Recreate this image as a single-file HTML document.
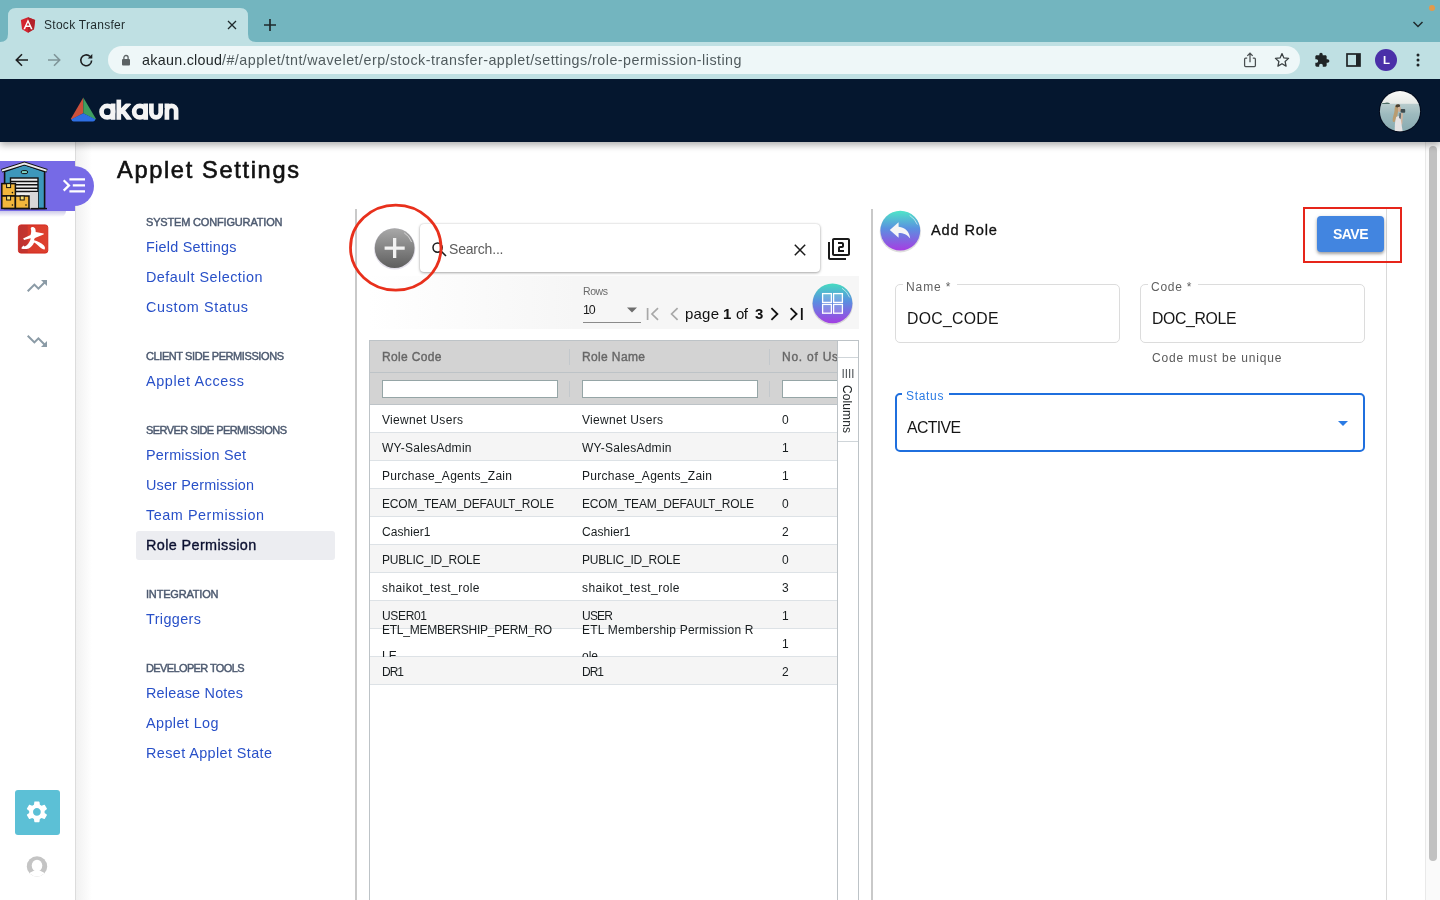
<!DOCTYPE html>
<html><head><meta charset="utf-8"><title>Stock Transfer</title>
<style>
*{box-sizing:border-box;margin:0;padding:0}
html,body{width:1440px;height:900px;overflow:hidden;background:#fff;font-family:"Liberation Sans",sans-serif;}
body{position:relative}
.a{position:absolute}
.t{position:absolute;white-space:pre;line-height:1;font-family:"Liberation Sans",sans-serif;}
svg{position:absolute;overflow:visible}
.t{will-change:transform;}

</style></head>
<body>
<div class="a" style="left:76px;top:142px;width:16px;height:758px;background:linear-gradient(90deg,#f1f1f1,#ffffff)"></div>
<div class="a" style="left:75px;top:142px;width:1px;height:758px;background:#dcdcdc"></div>
<div class="a" style="left:54px;top:166px;width:40px;height:40px;border-radius:20px;background:#766ae6"></div>
<div class="a" style="left:0;top:161px;width:75px;height:50px;background:#766ae6"></div>
<div class="a" style="left:0;top:211px;width:66px;height:6px;background:linear-gradient(180deg,rgba(90,80,180,.30),rgba(90,80,180,0));border-radius:0 0 8px 0"></div>
<svg style="left:0px;top:161px" width="48" height="50" viewBox="0 0 48 50">
<path d="M4.6 10.6 V47.5 H44.6 V10.6 L24.4 3.6 Z" fill="#3d97bb" stroke="#111" stroke-width="1.6"/>
<path d="M1.6 9.8 L24.4 2.4 L47 9.8" stroke="#111" stroke-width="3.8" fill="none" stroke-linejoin="miter"/>
<path d="M2 9.7 L24.4 2.5 L46.6 9.7" stroke="#ececec" stroke-width="1.9" fill="none"/>
<rect x="21.2" y="9.6" width="6.4" height="3" rx="1.5" fill="#7fd6c6" stroke="#111" stroke-width="1"/>
<rect x="10.5" y="17" width="27.5" height="30.5" fill="#ededed" stroke="#111" stroke-width="1.4"/>
<path d="M10.5 20.4 H38 M10.5 23.8 H38 M10.5 27.2 H38 M10.5 30.6 H38" stroke="#111" stroke-width="1.5"/>
<rect x="30" y="31" width="8" height="16.5" fill="#d8d8d8"/>
<rect x="1.8" y="22.6" width="13.6" height="12.4" fill="#f2b63c" stroke="#111" stroke-width="1.5"/>
<rect x="1.8" y="35" width="13.6" height="12.4" fill="#f2b63c" stroke="#111" stroke-width="1.5"/>
<rect x="15.4" y="35" width="13.6" height="12.4" fill="#f2b63c" stroke="#111" stroke-width="1.5"/>
<rect x="6.6" y="22.6" width="4" height="4" fill="#f9e27a" stroke="#111" stroke-width="1"/>
<rect x="6.6" y="35" width="4" height="4" fill="#f9e27a" stroke="#111" stroke-width="1"/>
<rect x="20.2" y="35" width="4" height="4" fill="#f9e27a" stroke="#111" stroke-width="1"/>
<circle cx="12.4" cy="31.6" r=".8" fill="#111"/><circle cx="12.4" cy="44" r=".8" fill="#111"/><circle cx="26" cy="44" r=".8" fill="#111"/>
<path d="M31 47.6 H47" stroke="#111" stroke-width="1.4"/>
</svg>
<svg style="left:62px;top:177px" width="24" height="17" viewBox="0 0 24 17" fill="none" stroke="#fff">
<path d="M1.700 3.2 L7 8.4 L1.700 13.600" stroke-width="2.2"/>
<path d="M7.4 2.4 H23 M10.8 8.4 H23 M7.4 14.4 H23" stroke-width="2.3"/></svg>
<svg style="left:18px;top:224px" width="31" height="30" viewBox="0 0 31 30">
<defs><linearGradient id="rg" x1="0" y1="0" x2="1" y2="0"><stop offset="0" stop-color="#bd3331"/><stop offset=".3" stop-color="#c4352f"/><stop offset=".34" stop-color="#d93b2d"/><stop offset="1" stop-color="#de412e"/></linearGradient></defs>
<rect x="0.4" y="0.9" width="29.4" height="28.2" rx="2.6" fill="url(#rg)" stroke="#d3241a" stroke-width=".9"/>
<path transform="translate(.1,.6)" d="M13.6 2.4 C15 2.2 16.6 2.8 17.2 4.2 C17.6 5.4 17.5 6.4 17.6 7.3 L25.6 8.9 C25.9 9.3 25.7 9.7 25.4 9.9 L17.4 13.2 C16.4 13.8 16 14.6 16 15.6 C19 16.4 23.6 18.4 25.8 21 C26.8 22.2 27.2 23.4 26.6 25 C24.4 24.6 22.6 23.2 20.8 21.6 C19.400 20.4 17.8 18.8 16 17.8 C15 20 13.4 22.4 10.6 23.8 C8.4 24.6 5.6 24.6 3.6 24.2 C3.2 23.8 3.2 23.4 3.6 23 L5.2 21 L6.6 21.800 C9 20.8 11.2 18.4 12.2 15.4 L12.6 13.6 L6 15.4 L5 14 L12.4 10.4 C13.2 8.6 13.4 5.6 12.6 3.6 Z" fill="#fff"/>
</svg>
<svg style="left:25px;top:274px" width="24" height="24" viewBox="0 0 24 24"><path d="M16 6l2.290 2.290-4.880 4.880-4-4L2 16.590 3.410 18l6-6 4 4 6.300-6.290L22 12V6z" fill="#8b9ba6"/></svg>
<svg style="left:25px;top:329px" width="24" height="24" viewBox="0 0 24 24"><path d="M16 18l2.290-2.290-4.880-4.880-4 4L2 7.410 3.410 6l6 6 4-4 6.300 6.290L22 12v6z" fill="#8b9ba6"/></svg>
<div class="a" style="left:15px;top:790px;width:45px;height:45px;border-radius:3px;background:#5cc0d6"></div>
<svg style="left:23.9px;top:799px" width="25.8" height="25.8" viewBox="0 0 24 24"><path d="M19.140 12.940c.040-.3.060-.61.060-.94 0-.32-.020-.64-.070-.94l2.030-1.580a.49.49 0 0 0 .12-.61l-1.920-3.320a.488.488 0 0 0-.59-.22l-2.390.96c-.5-.38-1.030-.7-1.620-.94l-.36-2.540a.484.484 0 0 0-.48-.41h-3.840c-.24 0-.43.170-.47.410l-.36 2.540c-.59.240-1.130.57-1.620.94l-2.390-.96c-.22-.08-.47 0-.59.220L2.740 8.870c-.12.210-.08.470.12.610l2.030 1.580c-.05.300-.09.630-.09.940s.02.640.07.940l-2.030 1.580a.49.49 0 0 0-.12.610l1.920 3.320c.12.220.37.290.59.220l2.390-.96c.5.380 1.030.7 1.620.94l.36 2.540c.5.240.24.410.48.410h3.840c.24 0 .44-.17.470-.41l.36-2.540c.59-.24 1.130-.56 1.620-.94l2.390.96c.22.080.47 0 .59-.22l1.920-3.320c.12-.22.070-.47-.12-.61l-2.010-1.580zM12 15.600c-1.980 0-3.600-1.620-3.600-3.600s1.620-3.600 3.600-3.600 3.600 1.620 3.600 3.600-1.620 3.600-3.600 3.600z" fill="#fff"/></svg>
<svg style="left:26px;top:856px" width="22" height="22" viewBox="0 0 22 22"><defs><clipPath id="uc"><circle cx="11" cy="10.4" r="10.2"/></clipPath></defs>
<circle cx="11" cy="10.4" r="10.2" fill="#c4c4c4"/>
<g clip-path="url(#uc)" fill="#fff"><ellipse cx="11" cy="9.600" rx="5.300" ry="5.900"/><path d="M1 24 C1 17.200 5.400 16 8.200 14.600 H13.800 C16.600 16 21 17.200 21 24 Z"/></g></svg>
<span class="t" style="left:117.00px;top:159.02px;font-size:23.6px;font-weight:400;color:#111;letter-spacing:1.663px;-webkit-text-stroke:0.62px #111;">Applet Settings</span>
<span class="t" style="left:146.00px;top:217.29px;font-size:11px;font-weight:400;color:#4d5a70;letter-spacing:-0.171px;-webkit-text-stroke:0.45px #4d5a70;">SYSTEM CONFIGURATION</span>
<span class="t" style="left:146.00px;top:240.21px;font-size:14.4px;font-weight:400;color:#2850c8;letter-spacing:0.255px;">Field Settings</span>
<span class="t" style="left:146.00px;top:270.21px;font-size:14.4px;font-weight:400;color:#2850c8;letter-spacing:0.481px;">Default Selection</span>
<span class="t" style="left:146.00px;top:300.21px;font-size:14.4px;font-weight:400;color:#2850c8;letter-spacing:0.634px;">Custom Status</span>
<span class="t" style="left:146.00px;top:351.29px;font-size:11px;font-weight:400;color:#4d5a70;letter-spacing:-0.414px;-webkit-text-stroke:0.45px #4d5a70;">CLIENT SIDE PERMISSIONS</span>
<span class="t" style="left:146.00px;top:374.21px;font-size:14.4px;font-weight:400;color:#2850c8;letter-spacing:0.633px;">Applet Access</span>
<span class="t" style="left:146.00px;top:425.29px;font-size:11px;font-weight:400;color:#4d5a70;letter-spacing:-0.556px;-webkit-text-stroke:0.45px #4d5a70;">SERVER SIDE PERMISSIONS</span>
<span class="t" style="left:146.00px;top:448.21px;font-size:14.4px;font-weight:400;color:#2850c8;letter-spacing:0.248px;">Permission Set</span>
<span class="t" style="left:146.00px;top:478.21px;font-size:14.4px;font-weight:400;color:#2850c8;letter-spacing:0.174px;">User Permission</span>
<span class="t" style="left:146.00px;top:508.21px;font-size:14.4px;font-weight:400;color:#2850c8;letter-spacing:0.545px;">Team Permission</span>
<div class="a" style="left:136px;top:531px;width:199px;height:29px;border-radius:3px;background:#ecedf1"></div>
<span class="t" style="left:146.00px;top:538.01px;font-size:14.4px;font-weight:400;color:#0b1030;letter-spacing:0.387px;-webkit-text-stroke:0.35px #0b1030;">Role Permission</span>
<span class="t" style="left:146.00px;top:589.29px;font-size:11px;font-weight:400;color:#4d5a70;letter-spacing:-0.186px;-webkit-text-stroke:0.45px #4d5a70;">INTEGRATION</span>
<span class="t" style="left:146.00px;top:612.21px;font-size:14.4px;font-weight:400;color:#2850c8;letter-spacing:0.393px;">Triggers</span>
<span class="t" style="left:146.00px;top:663.29px;font-size:11px;font-weight:400;color:#4d5a70;letter-spacing:-0.622px;-webkit-text-stroke:0.45px #4d5a70;">DEVELOPER TOOLS</span>
<span class="t" style="left:146.00px;top:686.21px;font-size:14.4px;font-weight:400;color:#2850c8;letter-spacing:0.217px;">Release Notes</span>
<span class="t" style="left:146.00px;top:716.21px;font-size:14.4px;font-weight:400;color:#2850c8;letter-spacing:0.410px;">Applet Log</span>
<span class="t" style="left:146.00px;top:746.21px;font-size:14.4px;font-weight:400;color:#2850c8;letter-spacing:0.400px;">Reset Applet State</span>
<div class="a" style="left:355px;top:209px;width:2px;height:691px;background:#c9c9c9"></div>
<div class="a" style="left:871px;top:209px;width:2px;height:691px;background:#c9c9c9"></div>
<div class="a" style="left:369px;top:276px;width:490px;height:53px;background:linear-gradient(90deg,#ffffff 0,#f6f6f6 42%)"></div>
<div class="a" style="left:420px;top:224px;width:400px;height:48px;border-radius:4px;background:#fff;box-shadow:0 1px 3px rgba(0,0,0,.32),0 0 2px rgba(0,0,0,.16)"></div>
<svg style="left:431.6px;top:242px" width="15" height="15" viewBox="0 0 15 15"><circle cx="5.6" cy="5.6" r="4.6" stroke="#1a1a1a" stroke-width="1.5" fill="none"/><path d="M9 9 L14 14" stroke="#1a1a1a" stroke-width="1.6"/></svg>
<span class="t" style="left:449.00px;top:241.65px;font-size:14px;font-weight:400;color:#5c5c5c;letter-spacing:-0.191px;">Search...</span>
<svg style="left:793.6px;top:244.2px" width="12" height="12" viewBox="0 0 12 12"><path d="M0.8 0.8 L11.2 11.2 M11.2 0.8 L0.8 11.2" stroke="#1a1a1a" stroke-width="1.5" fill="none"/></svg>
<svg style="left:826.8px;top:237px" width="24" height="24" viewBox="0 0 24 24"><path d="M3 5H1v16c0 1.100.9 2 2 2h16v-2H3V5zm18-4H7c-1.100 0-2 .9-2 2v14c0 1.100.9 2 2 2h14c1.100 0 2-.9 2-2V3c0-1.100-.9-2-2-2zm0 16H7V3h14v14zm-4-4h-4v-2h2c1.100 0 2-.89 2-2V7c0-1.110-.9-2-2-2h-4v2h4v2h-2c-1.100 0-2 .89-2 2v4h6v-2z" fill="#1a1a1a"/></svg>
<svg style="left:371px;top:225px" width="48" height="48" viewBox="0 0 48 48"><defs>
<linearGradient id="gg" x1="0" y1="0" x2="0" y2="1"><stop offset="0" stop-color="#a9a9a9"/><stop offset="1" stop-color="#5e5e5e"/></linearGradient></defs>
<circle cx="23.65" cy="23.9" r="20.7" fill="rgba(90,70,130,.16)"/>
<circle cx="23.65" cy="23.05" r="19.9" fill="url(#gg)"/>
<path d="M33.2 7.8 A18.6 18.6 0 0 1 40.6 17" stroke="rgba(255,255,255,.6)" stroke-width="1" fill="none"/>
<path d="M23.65 13 V33.1 M13.6 23.05 H33.7" stroke="#f2f2f2" stroke-width="3.3" fill="none"/></svg>
<svg style="left:345px;top:200px" width="102" height="96" viewBox="0 0 102 96"><ellipse cx="50.75" cy="47.65" rx="45.25" ry="42.55" stroke="#e8301c" stroke-width="2.8" fill="none"/></svg>
<span class="t" style="left:583.00px;top:286.11px;font-size:10.5px;font-weight:400;color:#6a6a6a;letter-spacing:-0.422px;">Rows</span>
<span class="t" style="left:583.00px;top:303.50px;font-size:12.4px;font-weight:400;color:#1a1a1a;letter-spacing:-1.197px;">10</span>
<svg style="left:627px;top:307px" width="10" height="6" viewBox="0 0 10 6"><path d="M0 0.4 H10 L5 5.6 Z" fill="#6e6e6e"/></svg>
<div class="a" style="left:583px;top:322px;width:58px;height:1px;background:#8a8a8a"></div>
<svg style="left:646px;top:307px" width="14" height="14" viewBox="0 0 14 14"><path d="M1.6 1 V13 M12 1.2 L6 7 L12 12.8" stroke="#a8a8a8" stroke-width="1.7" fill="none"/></svg>
<svg style="left:670px;top:307px" width="9" height="14" viewBox="0 0 9 14"><path d="M7.6 1.2 L1.6 7 L7.6 12.8" stroke="#a8a8a8" stroke-width="1.7" fill="none"/></svg>
<span class="t" style="left:685.00px;top:305.50px;font-size:15px;font-weight:400;color:#111;letter-spacing:0.208px;">page</span>
<span class="t" style="left:722.50px;top:305.50px;font-size:15px;font-weight:700;color:#111;letter-spacing:0.000px;">1</span>
<span class="t" style="left:735.50px;top:305.50px;font-size:15px;font-weight:400;color:#111;letter-spacing:-0.516px;">of</span>
<span class="t" style="left:754.80px;top:305.50px;font-size:15px;font-weight:700;color:#111;letter-spacing:0.000px;">3</span>
<svg style="left:770px;top:307px" width="9" height="14" viewBox="0 0 9 14"><path d="M1.4 1.2 L7.4 7 L1.4 12.8" stroke="#111" stroke-width="1.8" fill="none"/></svg>
<svg style="left:789px;top:307px" width="15" height="14" viewBox="0 0 15 14"><path d="M1.6 1.2 L7.6 7 L1.6 12.8 M12.8 1 V13" stroke="#111" stroke-width="1.8" fill="none"/></svg>
<svg style="left:809px;top:280px" width="48" height="48" viewBox="0 0 48 48"><defs>
<linearGradient id="gp" x1="0" y1="0" x2="0" y2="1"><stop offset="0" stop-color="#46dcc0"/><stop offset=".45" stop-color="#5a8fe0"/><stop offset="1" stop-color="#a33fe3"/></linearGradient></defs>
<circle cx="23.5" cy="24.4" r="20.4" fill="rgba(0,0,0,.13)"/>
<circle cx="23.5" cy="23.3" r="19.9" fill="url(#gp)"/>
<path d="M33 8.2 A19 19 0 0 1 40.6 17.4" stroke="rgba(255,255,255,.55)" stroke-width="1" fill="none"/>
<g stroke="#fff" stroke-width="1.3" fill="rgba(255,255,255,.16)"><rect x="13.6" y="13.6" width="8.8" height="8.8"/><rect x="24.6" y="13.6" width="8.8" height="8.8"/><rect x="13.6" y="24.4" width="8.8" height="8.8"/><rect x="24.6" y="24.4" width="8.8" height="8.8"/></g></svg>
<div class="a" style="left:369px;top:340px;width:490px;height:560px;border:1px solid #bdc3c7;border-bottom:none;background:#fff"></div>
<div class="a" style="left:370px;top:341px;width:467px;height:64px;background:#d3d3d3"></div>
<div class="a" style="left:370px;top:372px;width:467px;height:1px;background:#bdc3c7"></div>
<div class="a" style="left:370px;top:404px;width:467px;height:1px;background:#bdc3c7"></div>
<div class="a" style="left:569px;top:349px;width:1px;height:16px;background:#c3c8cc"></div>
<div class="a" style="left:569px;top:381px;width:1px;height:16px;background:#c3c8cc"></div>
<div class="a" style="left:769px;top:349px;width:1px;height:16px;background:#c3c8cc"></div>
<div class="a" style="left:769px;top:381px;width:1px;height:16px;background:#c3c8cc"></div>
<span class="t" style="left:382.00px;top:350.84px;font-size:12px;font-weight:400;color:#666666;letter-spacing:0.350px;-webkit-text-stroke:0.38px #666666;">Role Code</span>
<span class="t" style="left:582.00px;top:350.84px;font-size:12px;font-weight:400;color:#666666;letter-spacing:0.371px;-webkit-text-stroke:0.38px #666666;">Role Name</span>
<div class="a" style="left:782px;top:345px;width:55px;height:24px;overflow:hidden"><span class="t" style="left:0.00px;top:5.84px;font-size:12px;font-weight:400;color:#666666;letter-spacing:0.756px;-webkit-text-stroke:0.38px #666666;">No. of Users</span></div>
<div class="a" style="left:382px;top:380px;width:176px;height:18px;background:#fff;border:1px solid #95a5a6;"></div>
<div class="a" style="left:582px;top:380px;width:176px;height:18px;background:#fff;border:1px solid #95a5a6;"></div>
<div class="a" style="left:782px;top:380px;width:56px;height:18px;background:#fff;border:1px solid #95a5a6;border-right:none;"></div>
<div class="a" style="left:370px;top:405px;width:467px;height:28px;background:#fff;border-bottom:1px solid #dde2e6"></div>
<span class="t" style="left:382.00px;top:413.54px;font-size:12px;font-weight:400;color:#181d1f;letter-spacing:0.320px;">Viewnet Users</span>
<span class="t" style="left:582.00px;top:413.54px;font-size:12px;font-weight:400;color:#181d1f;letter-spacing:0.320px;">Viewnet Users</span>
<span class="t" style="left:782.00px;top:413.54px;font-size:12px;font-weight:400;color:#181d1f;">0</span>
<div class="a" style="left:370px;top:433px;width:467px;height:28px;background:#f5f5f5;border-bottom:1px solid #dde2e6"></div>
<span class="t" style="left:382.00px;top:441.54px;font-size:12px;font-weight:400;color:#181d1f;letter-spacing:0.270px;">WY-SalesAdmin</span>
<span class="t" style="left:582.00px;top:441.54px;font-size:12px;font-weight:400;color:#181d1f;letter-spacing:0.270px;">WY-SalesAdmin</span>
<span class="t" style="left:782.00px;top:441.54px;font-size:12px;font-weight:400;color:#181d1f;">1</span>
<div class="a" style="left:370px;top:461px;width:467px;height:28px;background:#fff;border-bottom:1px solid #dde2e6"></div>
<span class="t" style="left:382.00px;top:469.54px;font-size:12px;font-weight:400;color:#181d1f;letter-spacing:0.276px;">Purchase_Agents_Zain</span>
<span class="t" style="left:582.00px;top:469.54px;font-size:12px;font-weight:400;color:#181d1f;letter-spacing:0.276px;">Purchase_Agents_Zain</span>
<span class="t" style="left:782.00px;top:469.54px;font-size:12px;font-weight:400;color:#181d1f;">1</span>
<div class="a" style="left:370px;top:489px;width:467px;height:28px;background:#f5f5f5;border-bottom:1px solid #dde2e6"></div>
<span class="t" style="left:382.00px;top:497.54px;font-size:12px;font-weight:400;color:#181d1f;letter-spacing:-0.150px;">ECOM_TEAM_DEFAULT_ROLE</span>
<span class="t" style="left:582.00px;top:497.54px;font-size:12px;font-weight:400;color:#181d1f;letter-spacing:-0.150px;">ECOM_TEAM_DEFAULT_ROLE</span>
<span class="t" style="left:782.00px;top:497.54px;font-size:12px;font-weight:400;color:#181d1f;">0</span>
<div class="a" style="left:370px;top:517px;width:467px;height:28px;background:#fff;border-bottom:1px solid #dde2e6"></div>
<span class="t" style="left:382.00px;top:525.54px;font-size:12px;font-weight:400;color:#181d1f;letter-spacing:0.067px;">Cashier1</span>
<span class="t" style="left:582.00px;top:525.54px;font-size:12px;font-weight:400;color:#181d1f;letter-spacing:0.067px;">Cashier1</span>
<span class="t" style="left:782.00px;top:525.54px;font-size:12px;font-weight:400;color:#181d1f;">2</span>
<div class="a" style="left:370px;top:545px;width:467px;height:28px;background:#f5f5f5;border-bottom:1px solid #dde2e6"></div>
<span class="t" style="left:382.00px;top:553.54px;font-size:12px;font-weight:400;color:#181d1f;letter-spacing:-0.221px;">PUBLIC_ID_ROLE</span>
<span class="t" style="left:582.00px;top:553.54px;font-size:12px;font-weight:400;color:#181d1f;letter-spacing:-0.221px;">PUBLIC_ID_ROLE</span>
<span class="t" style="left:782.00px;top:553.54px;font-size:12px;font-weight:400;color:#181d1f;">0</span>
<div class="a" style="left:370px;top:573px;width:467px;height:28px;background:#fff;border-bottom:1px solid #dde2e6"></div>
<span class="t" style="left:382.00px;top:581.54px;font-size:12px;font-weight:400;color:#181d1f;letter-spacing:0.423px;">shaikot_test_role</span>
<span class="t" style="left:582.00px;top:581.54px;font-size:12px;font-weight:400;color:#181d1f;letter-spacing:0.423px;">shaikot_test_role</span>
<span class="t" style="left:782.00px;top:581.54px;font-size:12px;font-weight:400;color:#181d1f;">3</span>
<div class="a" style="left:370px;top:601px;width:467px;height:28px;background:#f5f5f5;border-bottom:1px solid #dde2e6"></div>
<span class="t" style="left:382.00px;top:609.54px;font-size:12px;font-weight:400;color:#181d1f;letter-spacing:-0.338px;">USER01</span>
<span class="t" style="left:582.00px;top:609.54px;font-size:12px;font-weight:400;color:#181d1f;letter-spacing:-0.781px;">USER</span>
<span class="t" style="left:782.00px;top:609.54px;font-size:12px;font-weight:400;color:#181d1f;">1</span>
<div class="a" style="left:370px;top:629px;width:467px;height:28px;background:#fff;border-bottom:1px solid #dde2e6"></div>
<span class="t" style="left:382.00px;top:624.14px;font-size:12px;font-weight:400;color:#181d1f;letter-spacing:-0.257px;">ETL_MEMBERSHIP_PERM_RO</span>
<div class="a" style="left:382px;top:650px;width:60px;height:7px;overflow:hidden"><span class="t" style="left:0.00px;top:0.24px;font-size:12px;font-weight:400;color:#181d1f;">LE</span></div>
<span class="t" style="left:582.00px;top:624.14px;font-size:12px;font-weight:400;color:#181d1f;letter-spacing:0.227px;">ETL Membership Permission R</span>
<div class="a" style="left:582px;top:650px;width:60px;height:7px;overflow:hidden"><span class="t" style="left:0.00px;top:0.24px;font-size:12px;font-weight:400;color:#181d1f;">ole</span></div>
<span class="t" style="left:782.00px;top:637.54px;font-size:12px;font-weight:400;color:#181d1f;">1</span>
<div class="a" style="left:370px;top:657px;width:467px;height:28px;background:#f5f5f5;border-bottom:1px solid #dde2e6"></div>
<span class="t" style="left:382.00px;top:665.54px;font-size:12px;font-weight:400;color:#181d1f;letter-spacing:-1.008px;">DR1</span>
<span class="t" style="left:582.00px;top:665.54px;font-size:12px;font-weight:400;color:#181d1f;letter-spacing:-1.008px;">DR1</span>
<span class="t" style="left:782.00px;top:665.54px;font-size:12px;font-weight:400;color:#181d1f;">2</span>
<div class="a" style="left:836.6px;top:341px;width:1px;height:559px;background:#bdc3c7"></div>
<div class="a" style="left:838px;top:341px;width:20px;height:559px;background:#fff"></div>
<div class="a" style="left:838px;top:357px;width:20px;height:1px;background:#cfd5d9"></div>
<div class="a" style="left:838px;top:441px;width:20px;height:1px;background:#cfd5d9"></div>
<svg style="left:842px;top:369px" width="12" height="9" viewBox="0 0 12 9"><path d="M1.2 0 V9 M4.4 0 V9 M7.6 0 V9 M10.8 0 V9" stroke="#5a5f63" stroke-width="1.2"/></svg>
<div class="a" style="left:838px;top:385px;width:20px;height:48px"><span class="t" style="left:15px;top:0;transform-origin:0 0;transform:rotate(90deg);font-size:12px;color:#181d1f;letter-spacing:0.1px">Columns</span></div>
<div class="a" style="left:1386px;top:209px;width:1px;height:691px;background:#d9d9d9"></div>
<svg style="left:876px;top:206px" width="50" height="50" viewBox="0 0 50 50"><defs>
<linearGradient id="gb" x1="0" y1="0" x2="0" y2="1"><stop offset="0" stop-color="#4fe6c8"/><stop offset=".45" stop-color="#5b90e0"/><stop offset="1" stop-color="#a63de2"/></linearGradient></defs>
<circle cx="24.3" cy="25.8" r="20.6" fill="rgba(0,0,0,.13)"/>
<circle cx="24.3" cy="24.6" r="19.9" fill="url(#gb)"/>
<path d="M33.6 9.4 A19 19 0 0 1 41.4 18.6" stroke="rgba(255,255,255,.6)" stroke-width="1" fill="none"/>
<path d="M22.6 16.2 L13.8 24 L22.6 31.8 V27 C27.6 27 31.2 28.4 34.2 32.6 C33.4 26 29.6 21.4 22.6 20.8 Z" fill="#f6f6f6"/></svg>
<span class="t" style="left:931.40px;top:222.94px;font-size:14.6px;font-weight:400;color:#111;letter-spacing:0.850px;-webkit-text-stroke:0.3px #111;">Add Role</span>
<div class="a" style="left:1317px;top:216px;width:67px;height:36px;border-radius:4px;background:#4285e0;box-shadow:0 2px 3px rgba(0,0,0,.3),0 1px 5px rgba(0,0,0,.12)"></div>
<span class="t" style="left:1332.70px;top:226.55px;font-size:14px;font-weight:700;color:#fff;letter-spacing:-0.531px;">SAVE</span>
<div class="a" style="left:1302.5px;top:207px;width:99.5px;height:56px;border:2px solid #e6251a"></div>
<div class="a" style="left:894.5px;top:284.4px;width:225.5px;height:59px;border:1px solid #dcdcdc;border-radius:5px"></div>
<div class="a" style="left:903px;top:283.4px;width:53.5px;height:4px;background:#fff"></div>
<span class="t" style="left:906.10px;top:281.14px;font-size:12px;font-weight:400;color:#5f5f5f;letter-spacing:0.897px;">Name *</span>
<span class="t" style="left:906.90px;top:310.63px;font-size:15.8px;font-weight:400;color:#151515;letter-spacing:0.281px;">DOC_CODE</span>
<div class="a" style="left:1139.5px;top:284.4px;width:225px;height:59px;border:1px solid #dcdcdc;border-radius:5px"></div>
<div class="a" style="left:1148px;top:283.4px;width:49.5px;height:4px;background:#fff"></div>
<span class="t" style="left:1151.10px;top:281.14px;font-size:12px;font-weight:400;color:#5f5f5f;letter-spacing:0.759px;">Code *</span>
<span class="t" style="left:1151.90px;top:310.63px;font-size:15.8px;font-weight:400;color:#151515;letter-spacing:-0.344px;">DOC_ROLE</span>
<span class="t" style="left:1151.50px;top:352.04px;font-size:12px;font-weight:400;color:#5a5a5a;letter-spacing:0.857px;">Code must be unique</span>
<div class="a" style="left:894.5px;top:393px;width:470px;height:59.3px;border:2px solid #1f6fde;border-radius:5px"></div>
<div class="a" style="left:901.5px;top:392px;width:47.5px;height:4px;background:#fff"></div>
<span class="t" style="left:906.10px;top:389.74px;font-size:12px;font-weight:400;color:#2b7be4;letter-spacing:0.674px;">Status</span>
<span class="t" style="left:906.90px;top:420.13px;font-size:15.8px;font-weight:400;color:#151515;letter-spacing:-0.613px;">ACTIVE</span>
<svg style="left:1338px;top:420.6px" width="10" height="5" viewBox="0 0 10 5"><path d="M0 0 H10 L5 5 Z" fill="#2b7be4"/></svg>
<div class="a" style="left:1425px;top:142px;width:15px;height:758px;background:#fafafa;border-left:1px solid #e9e9e9"></div>
<div class="a" style="left:1429px;top:145.5px;width:8px;height:715.5px;border-radius:4px;background:#c1c1c1"></div>
<div class="a" style="left:0;top:79px;width:1440px;height:63px;background:#05172f;box-shadow:0 3px 7px rgba(0,0,0,.32)"></div>
<svg style="left:70px;top:96px" width="28" height="27" viewBox="0 0 28 27">
<path d="M13.3 1.6 L1.2 22.2 Q0.6 23.4 1.8 23.4 L13.3 17.2 Z" fill="#cd503b"/>
<path d="M13.3 1.6 L25.6 22.2 Q26.2 23.4 25 23.4 L13.3 17.2 Z" fill="#3f9e60"/>
<path d="M13.3 17.2 L1.4 23.2 Q1.6 25.6 3.6 25.6 L23 25.6 Q25 25.6 25.4 23.2 Z" fill="#2e6fe3"/>
</svg>
<svg style="left:98px;top:96px" width="84" height="28" viewBox="0 0 84 28" fill="none" stroke="#f4f4f4" stroke-width="4.7" stroke-linecap="butt">
<defs><clipPath id="kc"><rect x="18" y="7.5" width="17" height="16.3"/></clipPath></defs>
<circle cx="9.3" cy="15.65" r="5.75"/><path d="M15.1 7.5 V23.8"/>
<path d="M20.8 3.6 V23.8"/><g clip-path="url(#kc)"><path d="M22 16.6 L31.6 6.6 M24.2 14.2 L32.4 25" stroke-width="4.6"/></g>
<circle cx="41.9" cy="15.65" r="5.75"/><path d="M47.7 7.5 V23.8"/>
<path d="M53.4 7.5 V16.8 a4.65 4.65 0 0 0 9.3 0 V7.5"/>
<path d="M68.9 23.8 V14.5 a4.6 4.6 0 0 1 9.2 0 V23.8 M68.9 7.5 V12"/>
</svg>
<svg style="left:1379px;top:90px" width="42" height="43" viewBox="0 0 42 43">
<defs><clipPath id="avc"><circle cx="21" cy="21.2" r="20.1"/></clipPath>
<linearGradient id="sky" x1="0" y1="0" x2="0" y2="1"><stop offset="0" stop-color="#fbfbf9"/><stop offset="1" stop-color="#e6e9e6"/></linearGradient>
<linearGradient id="sea" x1="0" y1="0" x2="0" y2="1"><stop offset="0" stop-color="#b9cccd"/><stop offset=".35" stop-color="#9dbabe"/><stop offset="1" stop-color="#86a8ae"/></linearGradient></defs>
<circle cx="21" cy="21.2" r="21.1" fill="#02091a"/>
<g clip-path="url(#avc)"><rect width="42" height="14" fill="url(#sky)"/><rect y="13.800" width="42" height="30" fill="url(#sea)"/>
<path d="M2 13.9 Q3.5 12.9 5.4 13.1 Q7.4 12.1 9.6 12.7 Q10.8 13.100 11 13.9 Z" fill="#4d6e66"/>
<path d="M18.600 14.200 C16.200 14.600 15.600 17.500 15.600 20 C15.400 24 13.400 27 13.600 30.500 C13.700 32 14.800 32.400 16.200 31.600 L18.200 26 L19.600 19 Z" fill="#b99c70"/>
<path d="M16.400 16.600 C16.600 14.200 19 13.600 20.400 14.600 C21.400 15.400 21.200 16.200 20.800 16.800 L18 17.600 Z" fill="#4a3f30"/>
<path d="M19 17.200 L21.600 16.800 L22.200 20.400 L20.400 22.200 L19 21 Z" fill="#d0ae94"/>
<rect x="21.600" y="19" width="4.600" height="3.800" rx=".8" fill="#3d4a4e"/>
<path d="M22.400 22.600 L24 23.400 L23.200 34.500 L21.400 34.500 Z" fill="#d5b49c"/>
<path d="M17.200 27 C18.400 25.800 20.600 26 21.400 27.400 L23.800 42 H15.800 C15.600 36 16 31 17.200 27 Z" fill="#e6e3e3"/>
<path d="M20.600 23 L21.800 23.200 L21.600 29 L20.200 28 Z" fill="#4a555a"/>
</g></svg>
<div class="a" style="left:0;top:0;width:1440px;height:42px;background:#73b5bf"></div>
<div class="a" style="left:0;top:42px;width:1440px;height:37px;background:#bfe0e3"></div>
<svg style="left:0;top:8px" width="258" height="34" viewBox="0 0 258 34"><path d="M0 34 Q8 34 8 26 V8 Q8 0 16 0 H240 Q248 0 248 8 V26 Q248 34 256 34 Z" fill="#bfe0e3"/></svg>
<svg style="left:20px;top:17px" width="16" height="16" viewBox="0 0 16 16">
<path d="M8 0.3 L0.9 2.9 L2 12.3 L8 15.7 L14 12.3 L15.1 2.9 Z" fill="#d4242f"/>
<path d="M8 0.3 V15.7 L14 12.3 L15.1 2.9 Z" fill="#b32129"/>
<path d="M8 2.2 L3.4 12.2 H5.1 L6 9.9 H10 L10.9 12.2 H12.6 Z M8 5.6 L9.4 8.6 H6.6 Z" fill="#fff"/></svg>
<span class="t" style="left:44.00px;top:19.04px;font-size:12px;font-weight:400;color:#1f2a2c;letter-spacing:0.279px;">Stock Transfer</span>
<svg style="left:227px;top:20px" width="10" height="10" viewBox="0 0 10 10"><path d="M1 1 L9 9 M9 1 L1 9" stroke="#1f2a2c" stroke-width="1.3" fill="none"/></svg>
<svg style="left:263px;top:18px" width="14" height="14" viewBox="0 0 14 14"><path d="M7 1 V13 M1 7 H13" stroke="#1f2a2c" stroke-width="1.7" fill="none"/></svg>
<svg style="left:1412px;top:20px" width="12" height="9" viewBox="0 0 12 9"><path d="M1.5 2 L6 6.5 L10.5 2" stroke="#1f2a2c" stroke-width="1.5" fill="none"/></svg>
<div class="a" style="left:1429px;top:5px;width:6.4px;height:6.4px;border-radius:50%;background:#e39a4c"></div>
<svg style="left:15px;top:53px" width="14" height="14" viewBox="0 0 14 14"><path d="M13 7 H1.5 M7 1.3 L1.3 7 L7 12.7" stroke="#1d1f21" stroke-width="1.6" fill="none"/></svg>
<svg style="left:47px;top:53px" width="14" height="14" viewBox="0 0 14 14"><path d="M1 7 H12.5 M7 1.3 L12.7 7 L7 12.7" stroke="#7f9498" stroke-width="1.6" fill="none"/></svg>
<svg style="left:79px;top:53px" width="15" height="15" viewBox="0 0 15 15"><path d="M12.6 7.4 A5.4 5.4 0 1 1 10.9 3.4" stroke="#1d1f21" stroke-width="1.6" fill="none"/><path d="M13.3 1 V5.6 H8.7 Z" fill="#1d1f21"/></svg>
<div class="a" style="left:108px;top:46px;width:1192px;height:28px;border-radius:14px;background:#eef7f8"></div>
<svg style="left:121px;top:54px" width="10" height="12" viewBox="0 0 10 12"><rect x="1" y="5" width="8" height="6.4" rx="1" fill="#5b6264"/><path d="M2.9 5.4 V3.6 a2.1 2.1 0 0 1 4.2 0 V5.4" stroke="#5b6264" stroke-width="1.3" fill="none"/></svg>
<span class="t" style="left:142.00px;top:53.20px;font-size:14.3px;font-weight:400;color:#1d2325;letter-spacing:0.289px;">akaun.cloud</span>
<span class="t" style="left:222.00px;top:53.20px;font-size:14.3px;font-weight:400;color:#505b5e;letter-spacing:0.470px;">/#/applet/tnt/wavelet/erp/stock-transfer-applet/settings/role-permission-listing</span>
<svg style="left:1243px;top:52px" width="14" height="16" viewBox="0 0 14 16"><path d="M4.2 6.2 H2.6 a1 1 0 0 0 -1 1 V13.6 a1 1 0 0 0 1 1 H11.4 a1 1 0 0 0 1 -1 V7.2 a1 1 0 0 0 -1 -1 H9.8 M7 10.2 V1.4 M4.3 3.9 L7 1.2 L9.7 3.9" stroke="#4a5052" stroke-width="1.25" fill="none"/></svg>
<svg style="left:1274px;top:52px" width="16" height="16" viewBox="0 0 16 16"><path d="M8 1.6 L9.9 5.9 L14.6 6.4 L11.1 9.5 L12.1 14.1 L8 11.7 L3.9 14.1 L4.9 9.5 L1.4 6.4 L6.1 5.9 Z" stroke="#3a4042" stroke-width="1.25" fill="none" stroke-linejoin="round"/></svg>
<svg style="left:1314px;top:52px" width="16" height="16" viewBox="0 0 24 24"><path d="M20.5 11H19V7c0-1.1-.9-2-2-2h-4V3.5C13 2.12 11.88 1 10.500 1S8 2.120 8 3.500V5H4c-1.100 0-1.990.9-1.990 2v3.800H3.500c1.490 0 2.700 1.210 2.700 2.700s-1.210 2.700-2.700 2.700H2V20c0 1.100.9 2 2 2h3.800v-1.500c0-1.490 1.210-2.700 2.700-2.700 1.490 0 2.700 1.210 2.700 2.700V22H17c1.100 0 2-.9 2-2v-4h1.500c1.380 0 2.500-1.120 2.500-2.500S21.880 11 20.500 11z" fill="#1f2426"/></svg>
<svg style="left:1346px;top:53px" width="15" height="14" viewBox="0 0 15 14"><rect x="1" y="1" width="13" height="12" stroke="#1f2426" stroke-width="1.7" fill="none"/><rect x="10" y="1" width="4" height="12" fill="#1f2426"/></svg>
<div class="a" style="left:1375px;top:49px;width:22px;height:22px;border-radius:50%;background:#4a2fa8"></div>
<span class="t" style="left:1382.90px;top:54.75px;font-size:11.4px;font-weight:700;color:#fff;">L</span>
<svg style="left:1416px;top:53px" width="4" height="14" viewBox="0 0 4 14"><circle cx="2" cy="2" r="1.5" fill="#1f2426"/><circle cx="2" cy="7" r="1.5" fill="#1f2426"/><circle cx="2" cy="12" r="1.5" fill="#1f2426"/></svg>
</body></html>
